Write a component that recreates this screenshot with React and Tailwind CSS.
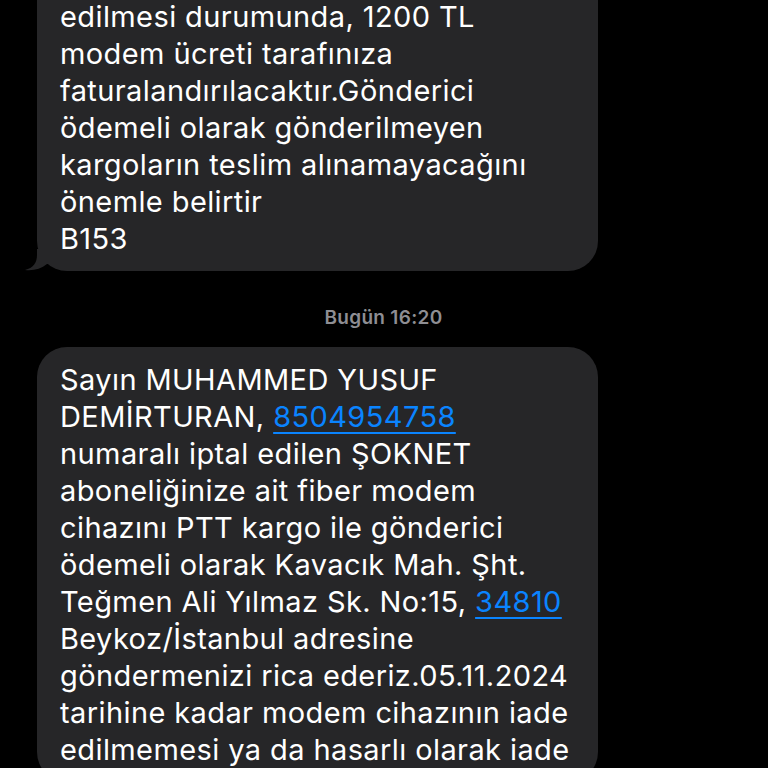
import React from "react";

const Link = ({ children }) => (
  <span className="text-[#0a84ff] underline decoration-[1.5px] underline-offset-[5px]">{children}</span>
);

const firstLines = [
  "edilmesi durumunda, 1200 TL",
  "modem ücreti tarafınıza",
  "faturalandırılacaktır.Gönderici",
  "ödemeli olarak gönderilmeyen",
  "kargoların teslim alınamayacağını",
  "önemle belirtir",
  "B153",
];

const Tail = () => (
  <svg className="absolute left-[-12px] bottom-0" width="34" height="22" viewBox="0 0 34 22">
    <path d="M12 0 L12 6 C12 14 8 19 0 21 C8 22 16 20 22 15 L34 15 L34 0 Z" fill="#262628" />
  </svg>
);

const App = () => {
  return (
    <div
      className="w-[768px] h-[768px] overflow-hidden bg-black text-white"
      style={{ fontFamily: "Inter, 'Noto Sans', sans-serif" }}
    >
      <div className="pl-[37px] w-[598px]">
        <div className="relative mt-[-2px] bg-[#262628] rounded-b-[30px] pl-[23px] pr-4 pb-[14px]">
          <div className="text-[29px] leading-[37px] tracking-[0.4px] whitespace-nowrap">
            {firstLines.map((l, i) => (
              <div key={i}>{l}</div>
            ))}
          </div>
          <Tail />
        </div>
      </div>

      <div className="flex justify-center pt-[35px] pb-[17px] pr-[1px]">
        <span className="text-[19px] leading-[24px] font-semibold tracking-[0.3px] text-[#8e8e93]">Bugün 16:20</span>
      </div>

      <div className="pl-[37px] w-[598px]">
        <div className="bg-[#262628] rounded-[30px] pl-[23px] pr-4 pt-[14px] pb-[14px]">
          <div className="text-[29px] leading-[37px] tracking-[0.4px] whitespace-nowrap">
            <div>Sayın MUHAMMED YUSUF</div>
            <div>
              DEMİRTURAN, <Link>8504954758</Link>
            </div>
            <div>numaralı iptal edilen ŞOKNET</div>
            <div>aboneliğinize ait fiber modem</div>
            <div>cihazını PTT kargo ile gönderici</div>
            <div>ödemeli olarak Kavacık Mah. Şht.</div>
            <div>
              Teğmen Ali Yılmaz Sk. No:15, <Link>34810</Link>
            </div>
            <div>Beykoz/İstanbul adresine</div>
            <div>göndermenizi rica ederiz.05.11.2024</div>
            <div>tarihine kadar modem cihazının iade</div>
            <div>edilmemesi ya da hasarlı olarak iade</div>
          </div>
        </div>
      </div>
    </div>
  );
};

export default App;
